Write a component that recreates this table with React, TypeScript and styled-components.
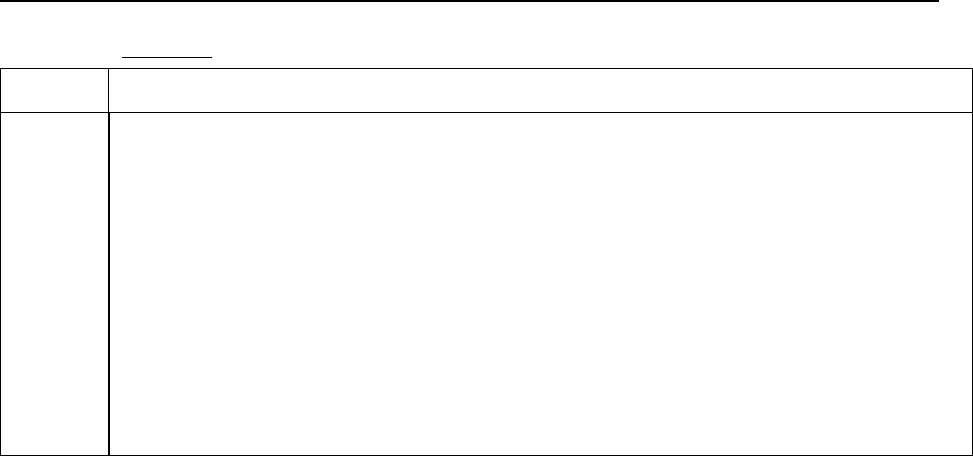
import React from "react";
import styled, { createGlobalStyle } from "styled-components";

const Global = createGlobalStyle`
  html, body { margin: 0; padding: 0; background: #fff; }
  body { font-family: "Liberation Serif", "Times New Roman", serif; font-size: 16px; color: #000; }
`;

const Page = styled.div`
  width: 973px;
  height: 456px;
  overflow: hidden;
  display: flex;
  flex-direction: column;
`;

const TopRule = styled.div`
  width: 939px;
  height: 2px;
  background: #000;
`;

const Caption = styled.div`
  margin-top: 55px;
  margin-left: 122px;
  width: 90px;
  height: 0;
  border-bottom: 1px solid #000;
`;

const Table = styled.div`
  margin-top: 10px;
  width: 973px;
  box-sizing: border-box;
  border: 1px solid #000;
  display: grid;
  grid-template-columns: 108px 1fr;
  grid-template-rows: 44px 342px;
`;

const Cell = styled.div<{ $head?: boolean; $first?: boolean }>`
  box-sizing: border-box;
  border-bottom: ${(p) => (p.$head ? "1px solid #000" : "none")};
  border-right: ${(p) => (p.$first ? "1px solid #000" : "none")};
  border-left: ${(p) => (!p.$first && !p.$head ? "1px solid #000" : "none")};
`;

export default function App() {
  return (
    <>
      <Global />
      <Page>
        <TopRule />
        <Caption />
        <Table>
          <Cell $head $first />
          <Cell $head />
          <Cell $first />
          <Cell />
        </Table>
      </Page>
    </>
  );
}
